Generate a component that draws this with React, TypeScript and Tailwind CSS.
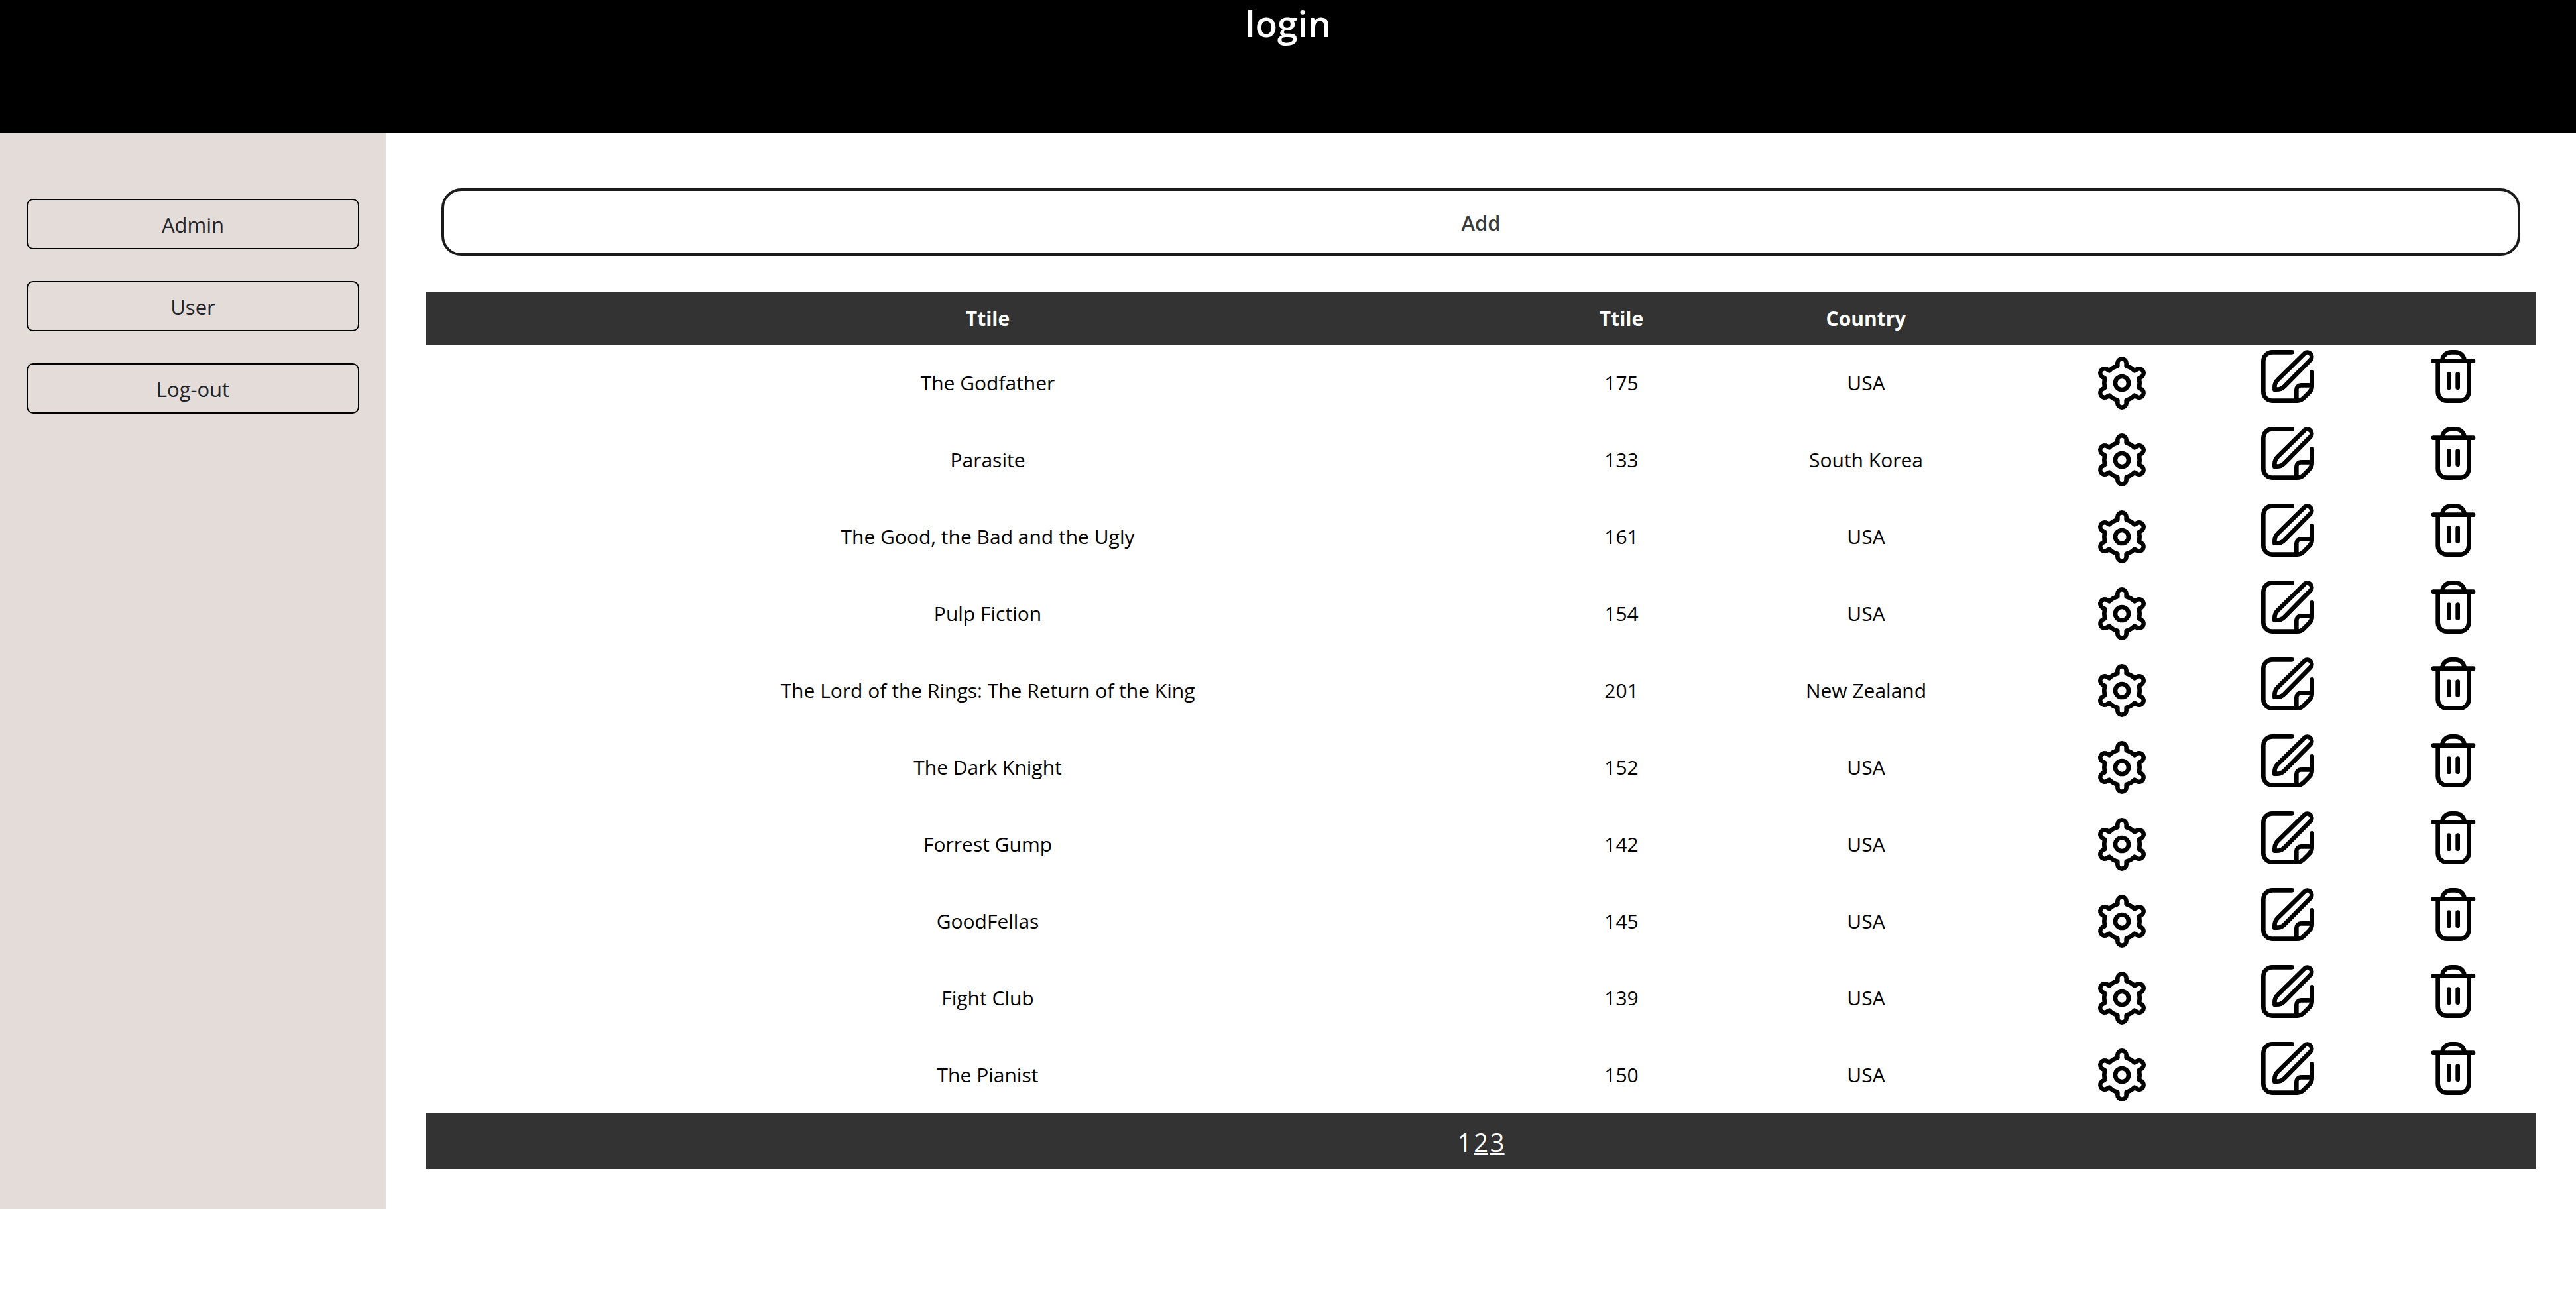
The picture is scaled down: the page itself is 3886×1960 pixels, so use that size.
import type { ReactNode } from "react";

type Movie = { title: string; runtime: number; country: string };

const movies: Movie[] = [
  { title: "The Godfather", runtime: 175, country: "USA" },
  { title: "Parasite", runtime: 133, country: "South Korea" },
  { title: "The Good, the Bad and the Ugly", runtime: 161, country: "USA" },
  { title: "Pulp Fiction", runtime: 154, country: "USA" },
  { title: "The Lord of the Rings: The Return of the King", runtime: 201, country: "New Zealand" },
  { title: "The Dark Knight", runtime: 152, country: "USA" },
  { title: "Forrest Gump", runtime: 142, country: "USA" },
  { title: "GoodFellas", runtime: 145, country: "USA" },
  { title: "Fight Club", runtime: 139, country: "USA" },
  { title: "The Pianist", runtime: 150, country: "USA" },
];

const menu = ["Admin", "User", "Log-out"];

function GearIcon() {
  return (
    <svg viewBox="0 0 24 24" className="size-20" fill="currentColor" aria-hidden="true">
      <path d="M12,8a4,4,0,1,0,4,4A4,4,0,0,0,12,8Zm0,6a2,2,0,1,1,2-2A2,2,0,0,1,12,14Z" />
      <path d="M21.294,13.9l-.444-.256a9.1,9.1,0,0,0,0-3.29l.444-.256a3,3,0,1,0-3-5.2l-.445.257A8.977,8.977,0,0,0,15,3.513V3A3,3,0,0,0,9,3v.513A8.977,8.977,0,0,0,6.152,5.159L5.705,4.9a3,3,0,0,0-3,5.2l.444.256a9.1,9.1,0,0,0,0,3.29l-.444.256a3,3,0,1,0,3,5.2l.445-.257A8.977,8.977,0,0,0,9,20.487V21a3,3,0,0,0,6,0v-.513a8.977,8.977,0,0,0,2.848-1.646l.447.258a3,3,0,0,0,3-5.2Zm-2.548-3.776a7.048,7.048,0,0,1,0,3.75,1,1,0,0,0,.464,1.133l1.084.626a1,1,0,0,1-1,1.733l-1.086-.628a1,1,0,0,0-1.215.165,6.984,6.984,0,0,1-3.243,1.875,1,1,0,0,0-.751.969V21a1,1,0,0,1-2,0V19.748a1,1,0,0,0-.751-.969A6.984,6.984,0,0,1,7.006,16.9a1,1,0,0,0-1.215-.165l-1.084.627a1,1,0,1,1-1-1.732l1.084-.626a1,1,0,0,0,.464-1.133,7.048,7.048,0,0,1,0-3.75A1,1,0,0,0,4.79,8.992L3.706,8.366a1,1,0,0,1,1-1.733l1.086.628A1,1,0,0,0,7.006,7.1a6.984,6.984,0,0,1,3.243-1.875A1,1,0,0,0,11,4.252V3a1,1,0,0,1,2,0V4.252a1,1,0,0,0,.751.969A6.984,6.984,0,0,1,16.994,7.1a1,1,0,0,0,1.215.165l1.084-.627a1,1,0,1,1,1,1.732l-1.084.626A1,1,0,0,0,18.746,10.125Z" />
    </svg>
  );
}

function EditIcon() {
  return (
    <svg
      viewBox="0 0 24 24"
      className="size-20"
      fill="none"
      stroke="currentColor"
      strokeWidth="2"
      strokeLinecap="round"
      strokeLinejoin="round"
      aria-hidden="true"
    >
      <path d="M14 1H5a4 4 0 0 0-4 4v14a4 4 0 0 0 4 4h11.34a4 4 0 0 0 2.83-1.17l2.66-2.66A4 4 0 0 0 23 16.34V10" />
      <path d="M16 23v-5a2 2 0 0 1 2-2h5" />
      <path d="M6.1 17.9v-.94c0-1.33.53-2.6 1.46-3.52L19.59 1.59a2 2 0 0 1 2.82 2.82L10.56 16.44c-.92.93-2.19 1.46-3.52 1.46Z" />
    </svg>
  );
}

function TrashIcon() {
  return (
    <svg viewBox="0 0 24 24" className="size-20" fill="currentColor" aria-hidden="true">
      <path d="M21,4H17.9A5.009,5.009,0,0,0,13,0H11A5.009,5.009,0,0,0,6.1,4H3A1,1,0,0,0,3,6H4V19a5.006,5.006,0,0,0,5,5h6a5.006,5.006,0,0,0,5-5V6h1a1,1,0,0,0,0-2ZM11,2h2a3.006,3.006,0,0,1,2.829,2H8.171A3.006,3.006,0,0,1,11,2Zm7,17a3,3,0,0,1-3,3H9a3,3,0,0,1-3-3V6H18Z" />
      <path d="M10,18a1,1,0,0,0,1-1V11a1,1,0,0,0-2,0v6A1,1,0,0,0,10,18Z" />
      <path d="M14,18a1,1,0,0,0,1-1V11a1,1,0,0,0-2,0v6A1,1,0,0,0,14,18Z" />
    </svg>
  );
}

function IconButton({ label, children }: { label: string; children: ReactNode }) {
  return (
    <button type="button" aria-label={label} className="mx-auto block cursor-pointer text-black">
      {children}
    </button>
  );
}

export default function App() {
  return (
    <div className="bg-white font-['Open_Sans','Noto_Sans',sans-serif] text-[30px] leading-[48px] text-black">
      <header className="h-[200px] bg-black text-center text-white">
        <h1 className="text-[55px] leading-[70px] font-semibold">login</h1>
      </header>

      <div className="flex">
        <nav className="flex w-[582px] shrink-0 flex-col gap-12 bg-[#e4dcd9] px-10 pt-[100px]">
          {menu.map((item) => (
            <button
              key={item}
              type="button"
              className="w-full cursor-pointer rounded-[10px] border-2 border-black pt-[13px] pb-[11px] text-[31px] text-[#212529]"
            >
              {item}
            </button>
          ))}
        </nav>

        <main className="min-w-0 flex-1 p-[60px]">
          <div className="px-6 pt-6 pb-[54px]">
            <button
              type="button"
              className="block w-full cursor-pointer rounded-[30px] border-4 border-[#1a1a1a] bg-white pt-6 pb-[22px] text-[31px] font-semibold text-[#3b3b3b]"
            >
              Add
            </button>
          </div>

          <table className="w-full table-fixed text-center">
            <colgroup>
              <col />
              <col className="w-[216px]" />
              <col className="w-[522px]" />
              <col className="w-[250px]" />
              <col className="w-[250px]" />
              <col className="w-[250px]" />
            </colgroup>
            <thead className="bg-[#333333] text-white">
              <tr>
                <th className="pt-[17px] pb-[15px] font-bold">Ttile</th>
                <th className="pt-[17px] pb-[15px] font-bold">Ttile</th>
                <th className="pt-[17px] pb-[15px] font-bold">Country</th>
                <td />
                <td />
                <td />
              </tr>
            </thead>
            <tbody>
              {movies.map((movie) => (
                <tr key={movie.title}>
                  <td>{movie.title}</td>
                  <td>{movie.runtime}</td>
                  <td>{movie.country}</td>
                  <td>
                    <IconButton label={`Settings for ${movie.title}`}>
                      <GearIcon />
                    </IconButton>
                  </td>
                  <td className="pt-2 pb-7">
                    <IconButton label={`Edit ${movie.title}`}>
                      <EditIcon />
                    </IconButton>
                  </td>
                  <td className="pt-2 pb-7">
                    <IconButton label={`Delete ${movie.title}`}>
                      <TrashIcon />
                    </IconButton>
                  </td>
                </tr>
              ))}
            </tbody>
          </table>

          <div className="flex justify-center gap-[3px] bg-[#333333] pt-[13px] pb-[11px] text-[38px] leading-[60px] text-white">
            <span aria-current="page">1</span>
            <a href="#page-2" className="underline">
              2
            </a>
            <a href="#page-3" className="underline">
              3
            </a>
          </div>
        </main>
      </div>
    </div>
  );
}
